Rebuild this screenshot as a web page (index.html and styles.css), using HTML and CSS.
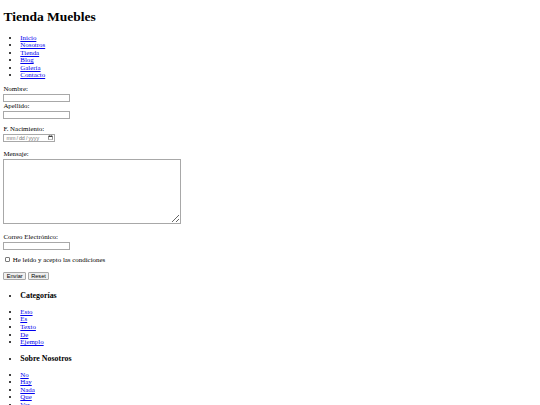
FILE: index.html
```html
<!DOCTYPE html>
<html lang="es">
<head>
<meta charset="utf-8">
<title>Tienda Muebles</title>
<link rel="stylesheet" href="styles.css">
</head>
<body>
<header>
<h1 class="title">Tienda Muebles</h1>
<nav>
<ul class="list nav-list">
<li><a href="#">Inicio</a></li>
<li><a href="#">Nosotros</a></li>
<li><a href="#">Tienda</a></li>
<li><a href="#">Blog</a></li>
<li><a href="#">Galería</a></li>
<li><a href="#">Contacto</a></li>
</ul>
</nav>
</header>
<main>
<form class="form">
<label class="label" for="nombre">Nombre:</label>
<input class="field f-nombre" type="text" id="nombre">
<label class="label" for="apellido">Apellido:</label>
<input class="field f-apellido" type="text" id="apellido">
<label class="label" for="fecha">F. Nacimiento:</label>
<input class="field f-fecha" type="date" id="fecha">
<label class="label" for="mensaje">Mensaje:</label>
<textarea class="message" id="mensaje"></textarea>
<label class="label" for="correo">Correo Electrónico:</label>
<input class="field f-correo" type="email" id="correo">
<div class="check-row">
<input class="check" type="checkbox" id="acepto">
<label for="acepto">He leído y acepto las condiciones</label>
</div>
<div class="actions">
<button class="btn" type="submit">Enviar</button>
<button class="btn" type="reset">Reset</button>
</div>
</form>
</main>
<aside>
<ul class="list"><li><h3 class="side-title">Categorías</h3></li></ul>
<ul class="list">
<li><a href="#">Esto</a></li>
<li><a href="#">Es</a></li>
<li><a href="#">Texto</a></li>
<li><a href="#">De</a></li>
<li><a href="#">Ejemplo</a></li>
</ul>
<ul class="list"><li><h3 class="side-title">Sobre Nosotros</h3></li></ul>
<ul class="list">
<li><a href="#">No</a></li>
<li><a href="#">Hay</a></li>
<li><a href="#">Nada</a></li>
<li><a href="#">Que</a></li>
<li><a href="#">Ver</a></li>
</ul>
</aside>
</body>
</html>
```

FILE: styles.css
```css
html {
  background: #fff;
}
body {
  margin: 0 3.4px;
  font-family: "Liberation Serif", "Times New Roman", serif;
  font-size: 6.9px;
  line-height: 7.6px;
  color: #000;
}
a {
  color: #0000ee;
  text-decoration: underline;
}
.title {
  margin: 9px 0;
  font-size: 13.5px;
  line-height: 15.5px;
  font-weight: bold;
}
.list {
  margin: 6.75px 0;
  padding-left: 16.9px;
  list-style: disc;
}
.nav-list {
  margin: 9px 0 6px;
}
.side-title {
  margin: 7.9px 0;
  font-size: 7.9px;
  line-height: 9.1px;
  font-weight: bold;
}
.form {
  display: flex;
  flex-direction: column;
  align-items: flex-start;
}
.label {
  display: block;
  line-height: 7.6px;
}
.field {
  display: block;
  box-sizing: border-box;
  width: 66.5px;
  height: 8px;
  padding: 0 1px;
  border: 1px solid #a8a8a8;
  border-radius: 0;
  background: #fff;
  font-family: "Liberation Sans", Arial, sans-serif;
  font-size: 5.6px;
  color: #555;
}
.f-nombre { margin: 1px 0 0.5px; }
.f-apellido { margin: 0.9px 0 5.9px; }
.f-fecha {
  width: 51.6px;
  margin: 1.8px 0 7.9px;
  padding: 0 0.5px 0 1px;
  color: #777;
  font-size: 5.4px;
}
.f-fecha::-webkit-calendar-picker-indicator {
  width: 5px;
  height: 5px;
  padding: 0;
  margin: 0 0.5px 0 0;
}
.f-fecha::-webkit-datetime-edit {
  padding: 0;
}
.f-correo { margin: 1.5px 0 6px; }
.message {
  display: block;
  box-sizing: border-box;
  width: 177.6px;
  height: 65px;
  margin: 1.2px 0 9.2px;
  padding: 1px;
  border: 1px solid #a8a8a8;
  border-radius: 0;
  font-size: 5.6px;
}
.check-row {
  display: flex;
  align-items: center;
  gap: 2.4px;
  height: 7.6px;
}
.check {
  appearance: none;
  -webkit-appearance: none;
  box-sizing: border-box;
  width: 5.2px;
  height: 5.2px;
  margin: 0 0 0 1.8px;
  border: 0.8px solid #7a7a7a;
  border-radius: 1px;
  background: #fff;
}
.actions {
  display: flex;
  gap: 1.8px;
  margin-top: 8.7px;
  padding-bottom: 2.8px;
}
.btn {
  box-sizing: border-box;
  height: 8px;
  padding: 0 2.4px;
  border: 1px solid #a8a8a8;
  border-radius: 1px;
  background: #efefef;
  font-family: "Liberation Sans", Arial, sans-serif;
  font-size: 5.6px;
  line-height: 6px;
  color: #000;
}
```
